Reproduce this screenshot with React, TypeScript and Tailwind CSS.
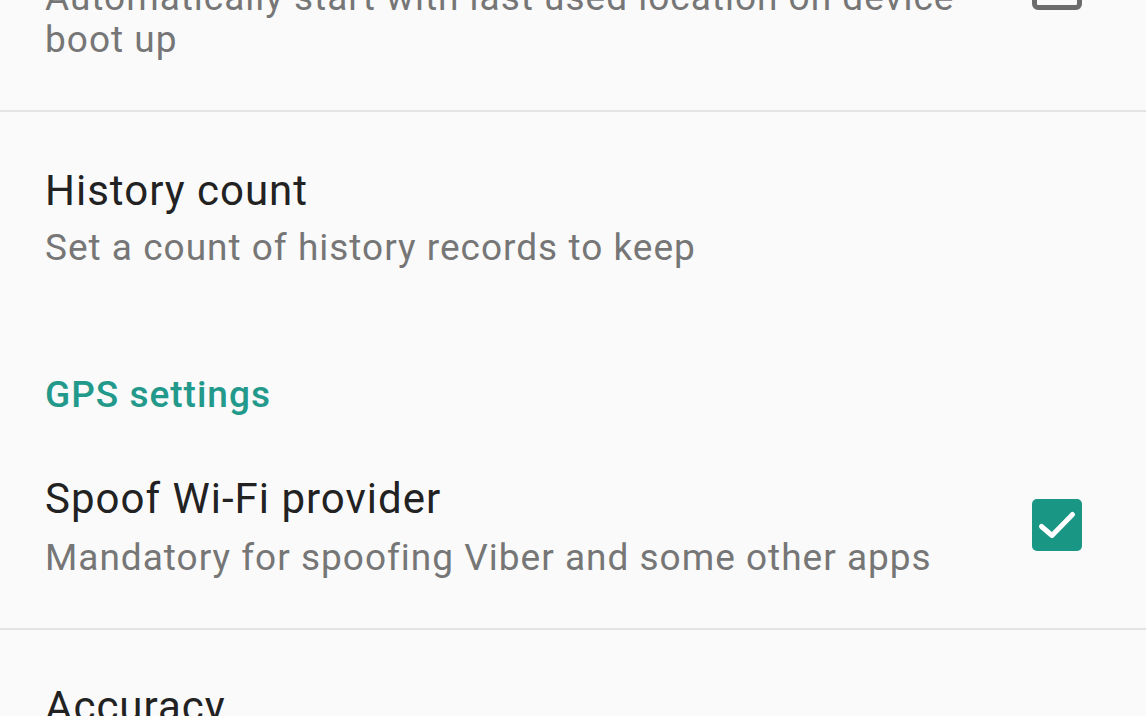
import React from "react";

function CheckedBox() {
  return (
    <div className="w-[50px] h-[52px] rounded-[5px] bg-[#1a9684] shrink-0">
      <svg width="50" height="52" viewBox="0 0 50 52" fill="none">
        <path d="M9.5 27.5l10.5 9 20.5-21" stroke="white" strokeWidth="5" strokeLinecap="round" strokeLinejoin="round" />
      </svg>
    </div>
  );
}

export default function App() {
  return (
    <div
      className="w-[1146px] h-[716px] overflow-hidden bg-[#fafafa] tracking-[1px]"
      style={{ fontFamily: "Roboto, 'Noto Sans', sans-serif" }}
    >
      {/* first item (cut off) */}
      <div className="flex items-start pl-[45px] pr-[64px] mt-[-23px]">
        <div className="flex-1 text-[37px] leading-[42px] text-[#767676]">
          Automatically start with last used location on device
          <br />
          boot up
        </div>
        <div className="w-[50px] h-[52px] rounded-[6px] border-[5px] border-[#6c6c6c] mt-[-19px] shrink-0" />
      </div>
      <div className="h-[49px]" />
      <div className="h-[2px] bg-[#e4e4e4]" />

      {/* History count */}
      <div className="pl-[45px] pt-[55px]">
        <div className="text-[42px] leading-[48px] text-[#222222]">History count</div>
        <div className="mt-[9px] text-[37px] leading-[48px] text-[#767676]">Set a count of history records to keep</div>
      </div>

      {/* GPS settings header */}
      <div className="pl-[45px] pt-[99px] text-[37px] leading-[48px] font-medium text-[#22998a]">
        GPS settings
      </div>

      {/* Spoof Wi-Fi */}
      <div className="flex items-start pl-[45px] pr-[64px] pt-[56px]">
        <div className="flex-1">
          <div className="text-[42px] leading-[48px] text-[#222222]">Spoof Wi-Fi provider</div>
          <div className="mt-[11px] text-[37px] leading-[48px] text-[#767676]">Mandatory for spoofing Viber and some other apps</div>
        </div>
        <div className="mt-[24px]">
          <CheckedBox />
        </div>
      </div>
      <div className="h-[46px]" />
      <div className="h-[2px] bg-[#e4e4e4]" />

      {/* Accuracy */}
      <div className="pl-[45px] pt-[53px]">
        <div className="text-[42px] leading-[48px] text-[#222222]">Accuracy</div>
      </div>
    </div>
  );
}
